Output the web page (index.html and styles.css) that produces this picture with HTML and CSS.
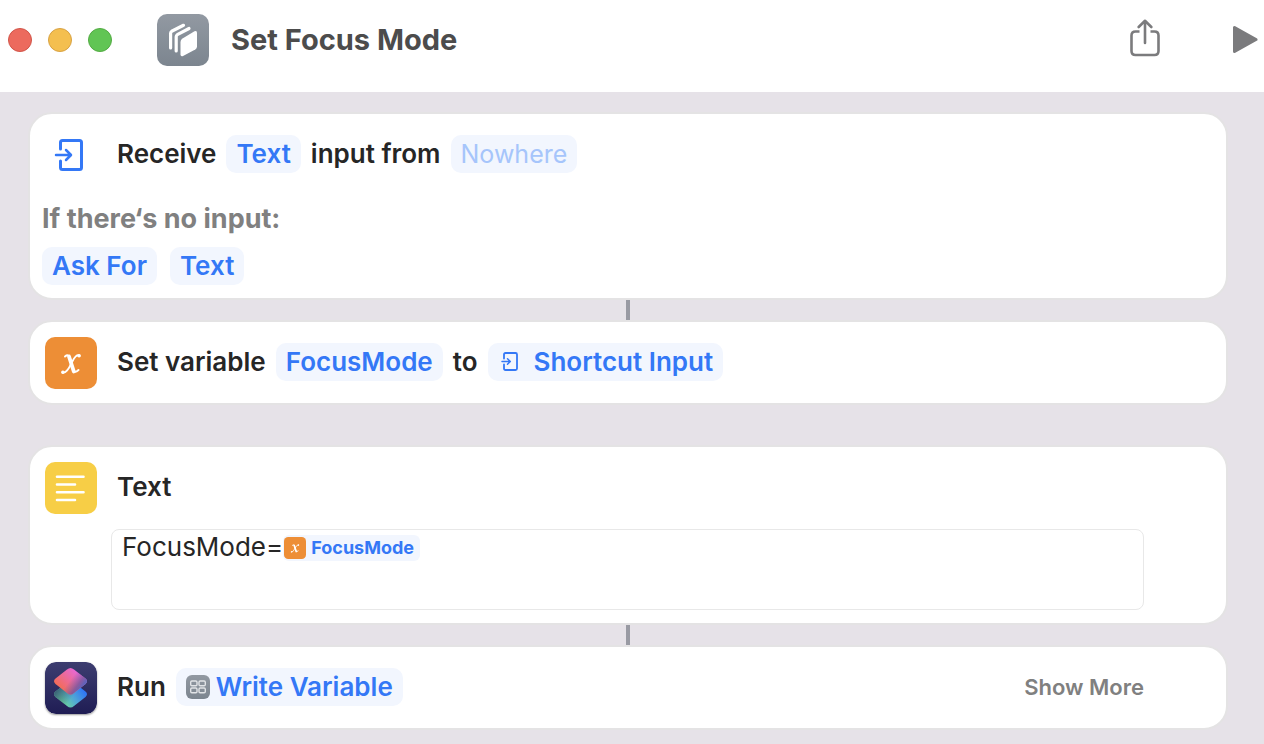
FILE: index.html
```html
<!DOCTYPE html>
<html lang="en">
<head>
<meta charset="utf-8">
<title>Set Focus Mode</title>
<link rel="stylesheet" href="styles.css">
</head>
<body>
<header class="titlebar">
  <div class="lights">
    <button class="light light-close" aria-label="Close"></button>
    <button class="light light-minimize" aria-label="Minimize"></button>
    <button class="light light-zoom" aria-label="Zoom"></button>
  </div>
  <svg class="app-icon" viewBox="0 0 52 52" aria-hidden="true">
    <defs>
      <linearGradient id="slate" x1="0" y1="0" x2="0" y2="1"><stop offset="0" stop-color="#9299a2"/><stop offset="1" stop-color="#7c858f"/></linearGradient>
    </defs>
    <rect width="52" height="52" rx="10" fill="url(#slate)"/>
    <g fill="none" stroke="#fff" stroke-width="3.200" stroke-linecap="round" stroke-linejoin="round">
      <path d="M13.600 34V19.300Q13.600 18 14.700 17.300L26.500 11.300"/>
      <path d="M19.200 37V22.800Q19.200 21.500 20.300 20.700L32 14.500"/>
    </g>
    <path d="M25.500 24.500L37.500 17.300Q40 16 40 18.800V32.500Q40 34.500 38.300 35.500L26.500 41.800Q23.500 43.300 23.500 40.300V28Q23.500 25.700 25.500 24.500Z" fill="#fff"/>
  </svg>
  <h1 class="title">Set Focus Mode</h1>
  <button class="tool" aria-label="Share">
    <svg width="30" height="42" viewBox="0 0 30 42" fill="none" stroke="#7b7b7d" stroke-width="2.600" stroke-linecap="round" stroke-linejoin="round" aria-hidden="true">
      <path d="M9.500 12.500H5.500Q1.500 12.500 1.500 16.500V32Q1.500 36 5.500 36H24.500Q28.500 36 28.500 32V16.500Q28.500 12.500 24.500 12.500H20.500" stroke-linecap="butt"/>
      <path d="M15 24V2M8.700 8L15 1.800L21.300 8"/>
    </svg>
  </button>
  <button class="tool" aria-label="Run shortcut">
    <svg width="26" height="32" viewBox="0 0 26 32" aria-hidden="true"><path d="M2.500 3.500V27.500L24 15.500Z" fill="#7b7b7d" stroke="#7b7b7d" stroke-width="3" stroke-linejoin="round"/></svg>
  </button>
</header>

<main class="flow">
  <section class="card">
    <div class="row">
      <span class="icon">
        <svg width="52" height="52" viewBox="0 0 52 52" fill="none" stroke="#3478f6" stroke-width="3" stroke-linecap="round" stroke-linejoin="round" aria-hidden="true">
          <path d="M15.500 20V13.500Q15.500 11.500 17.500 11.500H34.500Q36.500 11.500 36.500 13.500V38.500Q36.500 40.500 34.500 40.500H17.500Q15.500 40.500 15.500 38.500V32"/>
          <path d="M11 26H25M21 21L26 26L21 31" stroke-width="2.500"/>
        </svg>
      </span>
      <div class="phrase">
        <span>Receive</span><button class="chip">Text</button><span>input from</span><button class="chip chip-empty">Nowhere</button>
      </div>
    </div>
    <div class="fallback">
      <p class="hint">If there‘s no input:</p>
      <div class="choices"><button class="chip">Ask For</button><button class="chip">Text</button></div>
    </div>
  </section>
  <div class="connector"></div>
  <section class="card">
    <div class="row">
      <span class="icon">
        <svg width="52" height="52" viewBox="0 0 52 52" aria-hidden="true">
          <rect width="52" height="52" rx="10" fill="#ed8e36"/>
          <g id="italic-x" fill="none" stroke="#fff" stroke-linecap="round">
            <path d="M20 19.500Q23.500 16.500 25 21L28 32Q29.300 37 33.500 33" stroke-width="2"/>
            <path d="M24 19.500L28.800 34.500" stroke-width="3.800"/>
            <path d="M34.500 18.700Q31 16.500 26.500 26Q21.500 37 17.500 35.500" stroke-width="1.800"/>
            <path d="M34 18.800H34.200M17.800 35.200H18" stroke-width="3.400"/>
          </g>
        </svg>
      </span>
      <div class="phrase">
        <span>Set variable</span><button class="chip">FocusMode</button><span>to</span>
        <button class="chip chip-input">
          <svg width="24" height="24" viewBox="0 0 24 24" fill="none" stroke="#3478f6" stroke-width="1.800" stroke-linecap="round" stroke-linejoin="round" aria-hidden="true">
            <path d="M6 8.500V4.500Q6 3 7.500 3H17.500Q19 3 19 4.500V18.500Q19 20 17.500 20H7.500Q6 20 6 18.500V14.500"/>
            <path d="M4 11.500H12M9.500 8.700L12.300 11.500L9.500 14.300" stroke-width="1.500"/>
          </svg>Shortcut Input</button>
      </div>
    </div>
  </section>
  <div class="spacer"></div>
  <section class="card">
    <div class="row">
      <span class="icon">
        <svg width="52" height="52" viewBox="0 0 52 52" aria-hidden="true">
          <rect width="52" height="52" rx="10" fill="#f7ce46"/>
          <path d="M12 14.700H38.500M12 22.500H30M12 30.200H38.500M12 38H30" stroke="#fff" stroke-width="2.600" stroke-linecap="round"/>
        </svg>
      </span>
      <div class="phrase"><span id="text-label">Text</span></div>
    </div>
    <div class="editor" role="textbox" aria-multiline="true" aria-labelledby="text-label" contenteditable="true" spellcheck="false"><span>FocusMode=</span><span class="token" contenteditable="false"><svg width="22" height="22" viewBox="0 0 52 52" aria-hidden="true"><rect width="52" height="52" rx="10" fill="#ed8e36"/><use href="#italic-x"/></svg>FocusMode</span></div>
  </section>
  <div class="connector"></div>
  <section class="card">
    <div class="row">
      <span class="icon">
        <svg class="shortcuts" width="52" height="52" viewBox="0 0 52 52" aria-hidden="true">
          <defs>
            <linearGradient id="night" x1="0" y1="0" x2="0" y2="1"><stop offset="0" stop-color="#3d3d70"/><stop offset="1" stop-color="#1f1d54"/></linearGradient>
            <linearGradient id="aqua" gradientUnits="userSpaceOnUse" x1="40" y1="30" x2="20" y2="44"><stop offset="0" stop-color="#2f76f6"/><stop offset="0.500" stop-color="#4ea5d8"/><stop offset="1" stop-color="#6bd3a0"/></linearGradient>
            <linearGradient id="dusk" gradientUnits="userSpaceOnUse" x1="10" y1="30" x2="24" y2="40"><stop offset="0" stop-color="#3a6077"/><stop offset="1" stop-color="#3a6077" stop-opacity="0"/></linearGradient>
            <linearGradient id="coral" gradientUnits="userSpaceOnUse" x1="14" y1="24" x2="30" y2="8"><stop offset="0" stop-color="#f26c5c"/><stop offset="1" stop-color="#e868d4"/></linearGradient>
            <linearGradient id="violet" gradientUnits="userSpaceOnUse" x1="26" y1="17" x2="38" y2="26"><stop offset="0" stop-color="#7a5a9e" stop-opacity="0"/><stop offset="0.600" stop-color="#76569c" stop-opacity="0.800"/><stop offset="1" stop-color="#4d67c4"/></linearGradient>
            <path id="tile" d="M22 7.500Q25.500 4.500 29 7.500L40.500 16.500Q43.500 19.200 40.500 22L29 31Q25.500 34 22 31L10.500 22Q7.500 19.200 10.500 16.500Z"/>
            <path id="tile-low" d="M22 20.500Q25.500 17.500 29 20.500L40.500 29.500Q43.500 32.200 40.500 35L29 44Q25.500 47 22 44L10.500 35Q7.500 32.200 10.500 29.500Z"/>
          </defs>
          <rect width="52" height="52" rx="11" fill="url(#night)"/>
          <use href="#tile-low" fill="url(#aqua)"/>
          <use href="#tile-low" fill="url(#dusk)"/>
          <use href="#tile" fill="url(#coral)"/>
          <use href="#tile" fill="url(#violet)"/>
        </svg>
      </span>
      <div class="phrase">
        <span>Run</span>
        <button class="chip chip-shortcut">
          <svg width="24" height="24" viewBox="0 0 24 24" aria-hidden="true">
            <rect width="24" height="24" rx="6" fill="url(#slate)"/>
            <g fill="none" stroke="#e1e3e6" stroke-width="1.400"><rect x="4.700" y="6" width="6.300" height="4.800" rx="1.200"/><rect x="13" y="6" width="6.300" height="4.800" rx="1.200"/><rect x="4.700" y="13" width="6.300" height="4.800" rx="1.200"/><rect x="13" y="13" width="6.300" height="4.800" rx="1.200"/></g>
          </svg>Write Variable</button>
      </div>
      <button class="more">Show More</button>
    </div>
  </section>
</main>
</body>
</html>
```
FILE: styles.css
```css
* { box-sizing: border-box; }
body {
  margin: 0;
  min-height: 100vh;
  background: #e6e2e8;
  color: #262626;
  font-family: Inter, "Liberation Sans", sans-serif;
  font-size: 26px;
  font-weight: 600;
  line-height: 38px;
}
button {
  margin: 0;
  padding: 0;
  border: 0;
  background: none;
  color: inherit;
  font: inherit;
}
svg { display: block; flex: none; }
.titlebar {
  display: flex;
  align-items: center;
  padding: 14px 6px 26px 8px;
  background: #fff;
}
.lights { display: flex; gap: 16px; }
.light {
  width: 24px;
  height: 24px;
  border: 1px solid;
  border-radius: 50%;
}
.light-close { background: #ec6a5e; border-color: #d15549; }
.light-minimize { background: #f4bf4f; border-color: #d8a244; }
.light-zoom { background: #61c554; border-color: #53ab43; }
.app-icon { width: 52px; height: 52px; margin-left: 45px; }
.title {
  flex: 1;
  margin: 0 0 0 22px;
  color: #4c4c4c;
  font-size: 29px;
  font-weight: 700;
}
.tool + .tool { margin-left: 72px; }
.flow { padding: 20px 36px 14px 28px; }
.card {
  border: 2px solid #e4e3e4;
  border-radius: 24px;
  background: #fff;
}
.row {
  display: flex;
  align-items: center;
  gap: 20px;
  padding: 15px 82px 14px 15px;
}
.icon { flex: none; }
.phrase {
  display: flex;
  align-items: center;
  gap: 10px;
  padding-bottom: 2px;
  white-space: nowrap;
}
.chip {
  display: flex;
  align-items: center;
  padding: 0 10px;
  border-radius: 10px;
  background: #f2f6fe;
  color: #3478f6;
  white-space: nowrap;
}
.chip-empty { color: #a6c5fb; font-size: 25px; font-weight: 400; }
.chip-input { gap: 12px; }
.chip-shortcut { gap: 6px; }
.fallback { padding: 5px 12px 13px; }
.hint { margin: 0 0 9px; color: #808080; font-size: 27px; font-weight: 700; }
.choices { display: flex; gap: 13px; }
.connector {
  width: 4px;
  height: 20px;
  margin: 0 auto;
  background: #999aa3;
}
.spacer { height: 40px; }
.editor {
  display: flex;
  align-items: flex-start;
  min-height: 81px;
  margin: 1px 82px 13px 81px;
  padding: 0 10px;
  border: 1px solid #e8e8e8;
  border-radius: 8px;
  font-weight: 400;
  line-height: 34px;
}
.token {
  display: flex;
  align-items: center;
  gap: 5px;
  margin-top: 5px;
  padding: 2px 6px 2px 1px;
  border-radius: 6px;
  background: #f2f6fe;
  color: #3478f6;
  font-size: 18px;
  font-weight: 700;
  line-height: 22px;
}
.shortcuts { border-radius: 11px; box-shadow: 0 1px 2px #00000066; }
.more {
  margin-left: auto;
  padding-bottom: 2px;
  color: #808080;
  font-size: 22px;
}
```
